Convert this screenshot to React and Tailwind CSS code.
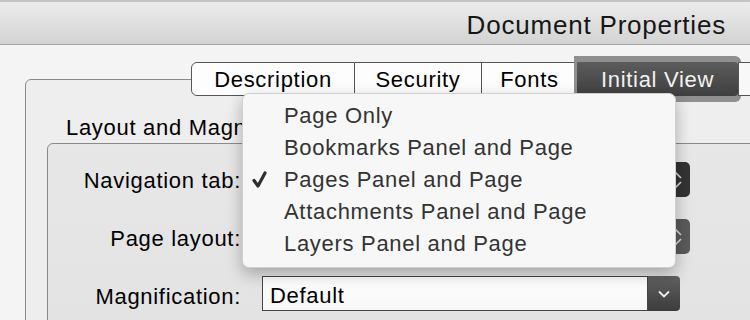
import React from 'react'

const menuItems = [
    'Page Only',
    'Bookmarks Panel and Page',
    'Pages Panel and Page',
    'Attachments Panel and Page',
    'Layers Panel and Page',
]

function Stepper({ dark }) {
    return (
        <div className={`flex w-[30px] items-center justify-center rounded-r-[5px] ${dark ? 'bg-[#333333]' : 'bg-[#5a5a5a]'}`}>
            <svg width="16" height="22" viewBox="0 0 16 22" fill="none" stroke="#d8d8d8" strokeWidth="1.6">
                <path d="M2 9 L8 3 L14 9" />
                <path d="M2 13 L8 19 L14 13" />
            </svg>
        </div>
    )
}

function PopUp({ dark }) {
    return (
        <div className="flex h-[35px] w-[428px]">
            <div className="flex-1 rounded-l-[5px] border border-[#9a9a9a] bg-white" />
            <Stepper dark={dark} />
        </div>
    )
}

export default function App() {
    return (
        <div className="relative h-[320px] w-[750px] overflow-hidden bg-[#f4f4f4] font-['Liberation_Sans',Arial,sans-serif] text-black">
            {/* title bar */}
            <div className="flex h-[45px] items-center justify-end border-t-2 border-b border-t-[#c4c4c4] border-b-[#a6a6a6] bg-gradient-to-b from-[#ececec] to-[#d3d3d3] pr-[24px]">
                <h1 className="mt-[3px] text-[26px] leading-none tracking-[0.8px] text-[#161616]">Document Properties</h1>
            </div>

            <div className="pl-[25px] pt-[17px]">
                {/* segmented tabs */}
                <div className="relative z-10 ml-[166px] flex h-[34px] w-[700px] text-[22px] tracking-[0.7px]">
                    <div className="flex w-[164px] shrink-0 items-center justify-center rounded-l-[6px] border border-[#555555] bg-[#fdfdfd]">
                        Description
                    </div>
                    <div className="flex w-[127px] shrink-0 items-center justify-center border-y border-r border-[#555555] bg-[#fdfdfd]">
                        Security
                    </div>
                    <div className="flex w-[95px] shrink-0 items-center justify-center border-y border-[#555555] bg-[#fdfdfd]">
                        Fonts
                    </div>
                    <div className="flex w-[161px] shrink-0 items-center justify-center rounded-r-[3px] bg-gradient-to-b from-[#5c5c5c] to-[#3f3f3f] text-[#f2f2f2] shadow-[0_-3px_0_3px_#8f8f8f,0_3px_0_3px_#8f8f8f]">
                        Initial View
                    </div>
                    <div className="w-[100px] shrink-0 border-y border-l border-[#555555] bg-[#f8f8f8]" />
                </div>

                {/* outer group box */}
                <div className="-mt-[17px] h-[300px] w-[800px] rounded-[6px] border border-[#8a8a8a] bg-[#eeeeee] pl-[21px] pt-[36px]">
                    <div className="pl-[19px] text-[22px] leading-[24px] tracking-[0.7px]">Layout and Magnification</div>

                    <div className="mt-[3px] flex h-[220px] flex-col gap-[22px] rounded-[6px] border border-[#8a8a8a] bg-gradient-to-b from-[#e7e7e7] to-[#e2e2e2] pt-[18px] text-[22px] tracking-[0.7px]">
                        <div className="flex h-[35px] items-center">
                            <div className="w-[193px] pt-[1px] text-right">Navigation tab:</div>
                            <div className="ml-[21px]"><PopUp dark /></div>
                        </div>
                        <div className="flex h-[35px] items-center">
                            <div className="w-[193px] pt-[3px] text-right">Page layout:</div>
                            <div className="ml-[21px]"><PopUp /></div>
                        </div>
                        <div className="flex h-[35px] items-center">
                            <div className="w-[193px] pt-[5px] text-right">Magnification:</div>
                            <div className="ml-[21px] flex h-[35px] w-[418px]">
                                <div className="flex flex-1 items-center border border-[#454545] bg-gradient-to-b from-white to-[#f7f7f7] pl-[7px] pt-[4px]">
                                    Default
                                </div>
                                <div className="flex w-[32px] items-center justify-center rounded-r-[4px] bg-gradient-to-b from-[#626262] to-[#3c3c3c]">
                                    <svg width="12" height="8" viewBox="0 0 12 8" fill="none" stroke="#f0f0f0" strokeWidth="1.8">
                                        <path d="M1 1.5 L6 6.5 L11 1.5" />
                                    </svg>
                                </div>
                            </div>
                        </div>
                    </div>
                </div>
            </div>

            {/* open pop-up menu */}
            <div className="absolute left-[242px] top-[93px] z-20 h-[175px] w-[434px] rounded-[7px] border border-[#d0d0d0] bg-[#f7f7f7] pt-[5px] shadow-[0_6px_16px_rgba(0,0,0,0.28)]">
                {menuItems.map((item) => (
                    <div key={item} className="relative flex h-[32px] items-center pl-[41px] text-[22px] tracking-[0.7px] text-[#333333]">
                        {item === 'Pages Panel and Page' && (
                            <svg className="absolute left-[9px] top-[8px]" width="15" height="17" viewBox="0 0 15 17" fill="none" stroke="#2e2e2e" strokeWidth="3.2" strokeLinecap="round" strokeLinejoin="round">
                                <path d="M2 9.5 L6 15 L13 2" />
                            </svg>
                        )}
                        {item}
                    </div>
                ))}
            </div>
        </div>
    )
}
